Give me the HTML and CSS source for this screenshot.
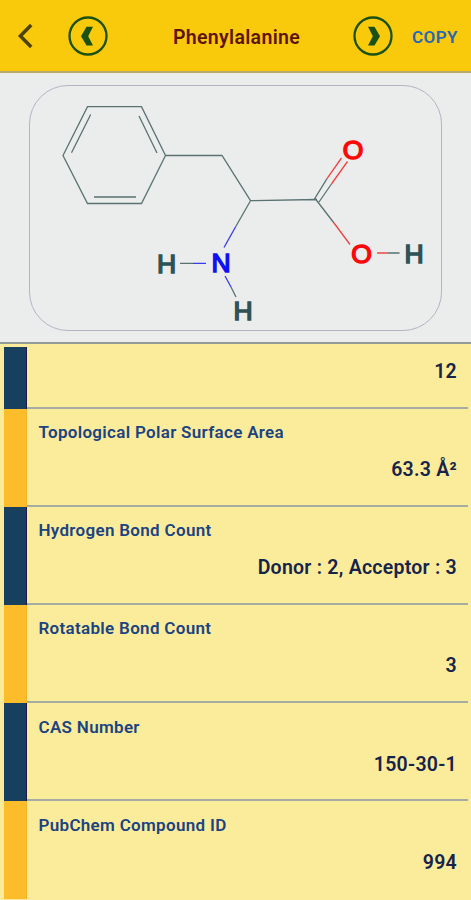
FILE: index.html
```html
<!DOCTYPE html>
<html lang="en">
<head>
<meta charset="utf-8">
<meta name="viewport" content="width=device-width, initial-scale=1">
<title>Phenylalanine</title>
<link rel="stylesheet" href="styles.css">
</head>
<body>
<header class="bar">
  <svg class="back" width="18" height="26" viewBox="0 0 18 26"><path d="M15.200 2 4.400 13 15.200 24"/></svg>
  <svg class="nav prev" width="40" height="40" viewBox="0 0 40 40"><circle cx="20" cy="20" r="18.500"/><path d="M18.500 10.800h6.500l-4.800 9.400 4.800 9.400h-6.500L13 20.200z"/></svg>
  <h1 class="title">Phenylalanine</h1>
  <svg class="nav next" width="40" height="40" viewBox="0 0 40 40"><circle cx="20" cy="20" r="18.500"/><path d="M21.500 10.800h-6.500l4.800 9.400-4.800 9.400h6.500L27 20.200z"/></svg>
  <span class="copy">COPY</span>
</header>
<section class="stage">
  <div class="card">
    <svg class="molecule" width="411" height="244" viewBox="30 86 411 244">
      <g class="carbon">
        <path d="M63 155.500 87.500 106.700H141.500L165.500 155.500 141.500 203.500H87.500ZM71.500 152.800 90.700 114.500M139 116 157 153M94 197H136"/>
        <path d="M165.500 155.500H222L250.500 200.700 317 199.500M250.500 200.700 235.500 227M314.500 199 326.800 178.800M319 202 331.800 183.500M315.500 199 334 223M180 263.300H193M231 287 236 297M388 253H399.500"/>
      </g>
      <path class="nitrogen" d="M235.500 227 224 247.500M193 263.300H206M225 276 231 287"/>
      <path class="oxygen" d="M326.800 178.800 341.500 158M331.800 183.500 347.500 161.500M334 223 350 244.500M377 253H388"/>
      <g class="atoms">
        <text class="o" x="353" y="159.200">O</text>
        <text class="o" x="361.500" y="263">O</text>
        <text class="n" x="221" y="272">N</text>
        <text x="166.500" y="273.400">H</text>
        <text x="243" y="319.700">H</text>
        <text x="414" y="263.200">H</text>
      </g>
    </svg>
  </div>
</section>
<main class="list">
  <div class="row first"><div class="cell"><b class="value">12</b></div></div>
  <div class="row amber"><div class="cell"><span class="label">Topological Polar Surface Area</span><b class="value">63.3 Å²</b></div></div>
  <div class="row"><div class="cell"><span class="label">Hydrogen Bond Count</span><b class="value">Donor : 2, Acceptor : 3</b></div></div>
  <div class="row amber"><div class="cell"><span class="label">Rotatable Bond Count</span><b class="value">3</b></div></div>
  <div class="row"><div class="cell"><span class="label">CAS Number</span><b class="value">150-30-1</b></div></div>
  <div class="row amber last"><div class="cell"><span class="label">PubChem Compound ID</span><b class="value">994</b></div></div>
</main>
</body>
</html>
```
FILE: styles.css
```css
*, *::before { box-sizing: border-box; }
body {
  margin: 0;
  height: 900px;
  overflow: hidden;
  display: flex;
  flex-direction: column;
  background: #faec9b;
  font-family: Roboto, sans-serif;
}
.bar {
  flex: none;
  height: 73px;
  display: flex;
  align-items: center;
  padding: 0 13px 0 16px;
  background: #f9ca0b;
  border-bottom: 2px solid #b9a96a;
}
.back { fill: none; stroke: #4f430c; stroke-width: 3.5; }
.nav circle { fill: none; stroke: #1b5213; stroke-width: 2.3; }
.nav path { fill: #1b5213; }
.prev { margin-left: 34px; }
.title {
  flex: 1;
  margin: 3px 0 0 12px;
  text-align: center;
  font-size: 19.500px;
  font-weight: 600;
  letter-spacing: .33px;
  color: #5d140c;
}
.copy {
  width: 46px;
  margin: 2px 0 0 19px;
  font-size: 17px;
  font-weight: 600;
  letter-spacing: .4px;
  color: #2867b4;
}
.stage {
  flex: none;
  height: 270.500px;
  padding: 12px 29px 0;
  background: #ebecec;
  border-bottom: 2px solid #929a98;
}
.card {
  height: 246px;
  border: 1px solid #b2b5c4;
  border-radius: 39px;
}
.molecule { display: block; }
.molecule path { fill: none; stroke-width: 1.3; }
.carbon { stroke: #5a7272; }
.molecule .nitrogen { stroke: #3a3aef; }
.molecule .oxygen { stroke: #f04343; }
.atoms {
  font: 26.500px "Liberation Sans", sans-serif;
  text-anchor: middle;
  fill: #2f5355;
  stroke: #2f5355;
  stroke-width: 1.5;
}
.atoms .o { fill: #fd0808; stroke: #fd0808; }
.atoms .n { fill: #1010f5; stroke: #1010f5; }
.list { padding: 3.500px 3px 0 4px; }
.row {
  height: 98.200px;
  display: flex;
}
.row::before {
  content: "";
  width: 23px;
  background: #173f5e;
  border-right: 1px solid #1b1850;
}
.amber::before { background: #fdbd2b; border-right-color: #f6b32a; }
.cell {
  flex: 1;
  display: flex;
  flex-direction: column;
  justify-content: space-between;
  padding: 13.500px 11px 22.600px 11.500px;
  border-bottom: 2px solid #a5aca0;
}
.first { height: 61.500px; }
.first .cell { justify-content: flex-end; }
.last { height: 97.300px; }
.last .cell { padding-bottom: 21.500px; border-bottom-color: transparent; }
.label {
  font-size: 17px;
  line-height: 20px;
  font-weight: 600;
  letter-spacing: .31px;
  color: #1b4382;
}
.value {
  align-self: flex-end;
  font-size: 19.500px;
  line-height: 24px;
  font-weight: 600;
  letter-spacing: .25px;
  color: #16234b;
}
```
